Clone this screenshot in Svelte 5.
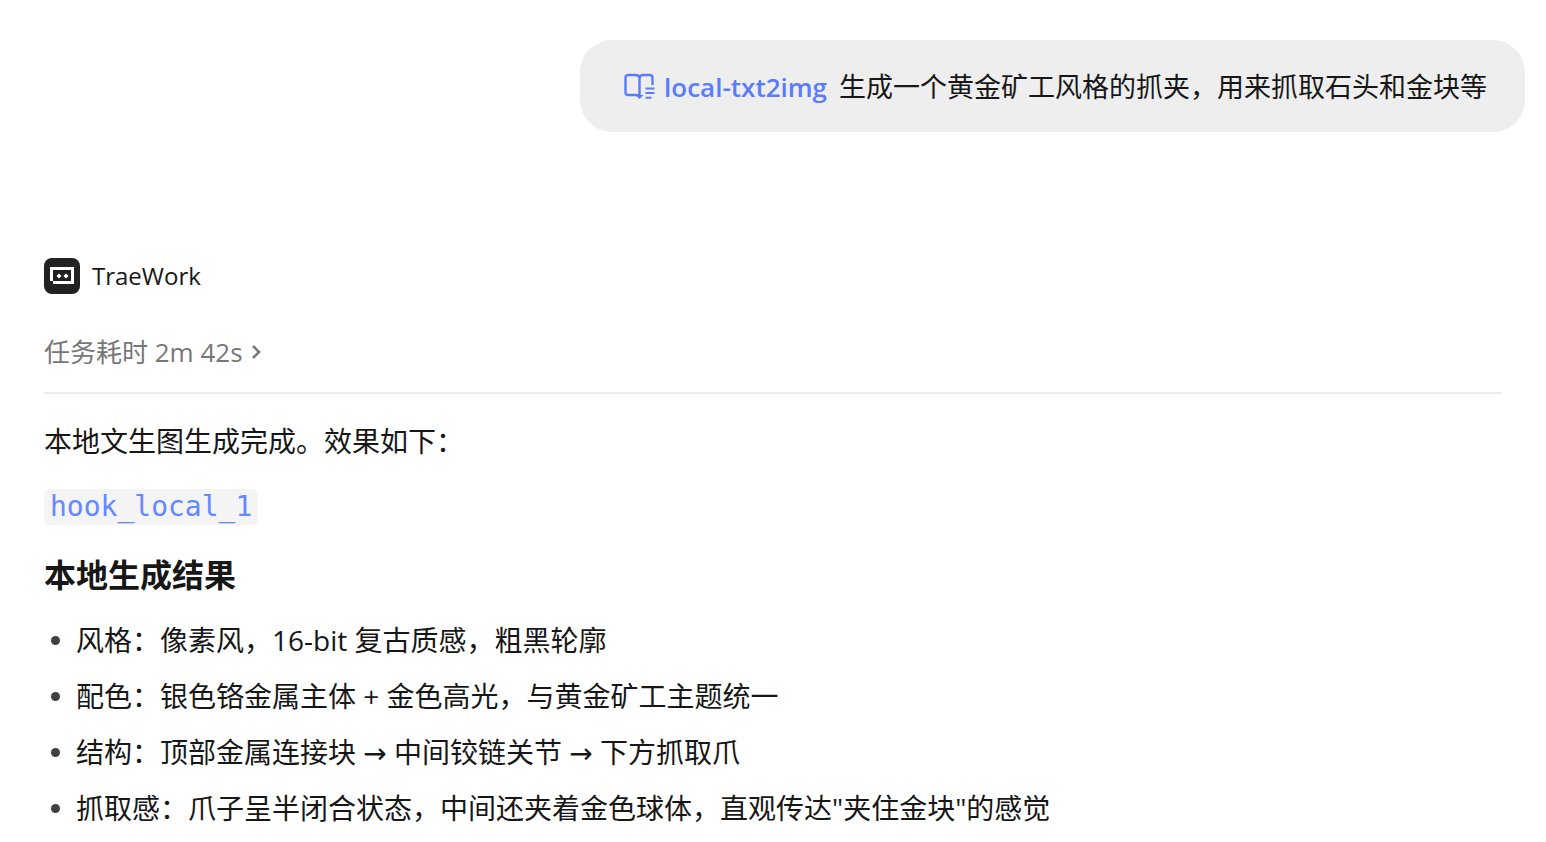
<script>
  const skill = 'local-txt2img';
  const prompt = '生成一个黄金矿工风格的抓夹，用来抓取石头和金块等';

  const details = [
    { label: '风格', text: '像素风，16-bit 复古质感，粗黑轮廓' },
    { label: '配色', text: '银色铬金属主体 + 金色高光，与黄金矿工主题统一' },
    { label: '结构', text: '顶部金属连接块 → 中间铰链关节 → 下方抓取爪' },
    { label: '抓取感', text: '爪子呈半闭合状态，中间还夹着金色球体，直观传达"夹住金块"的感觉' }
  ];
</script>

<main class="chat">
  <section class="user-row">
    <div class="bubble">
      <a class="skill" href="#skill">
        <svg width="32" height="28" viewBox="0 0 32 28" fill="none" aria-hidden="true">
          <path
            d="M15.5 23.5C15 22 13.5 22 11.5 22H4C2.3 22 1.5 21.2 1.5 19.5V5C1.5 3 2.5 2 4.5 2H11.5C14 2 15.5 3 15.5 5.5V23.5ZM15.5 5.5C15.5 3 17 2 19.5 2H25.5C27.5 2 28.5 3 28.5 5V12"
            stroke="currentColor"
            stroke-width="2.4"
            stroke-linejoin="round"
          />
          <path d="M11.5 22H19.5L15.5 26Z" fill="currentColor" />
          <path d="M21.5 15.5H30.5M21.5 20H30.5M21.5 24.8H27.5" stroke="currentColor" stroke-width="2" />
        </svg>
        <span>{skill}</span>
      </a>
      <span>{prompt}</span>
    </div>
  </section>

  <section class="reply">
    <header class="agent">
      <svg width="36" height="36" viewBox="0 0 36 36" aria-hidden="true">
        <rect width="36" height="36" rx="8" fill="#222" />
        <path d="M6 9H30V26H9V23H6ZM9 12V23H27V12Z" fill="#fff" fill-rule="evenodd" />
        <path d="M15 15.5L17.5 18L15 20.5L12.5 18ZM22 15.5L24.5 18L22 20.5L19.5 18Z" fill="#fff" />
      </svg>
      <span>TraeWork</span>
    </header>

    <button class="elapsed" type="button">
      <span>任务耗时 2m 42s</span>
      <svg width="10" height="14" viewBox="0 0 10 14" fill="none" aria-hidden="true">
        <path d="M2 1L8 7L2 13" stroke="currentColor" stroke-width="2.6" />
      </svg>
    </button>

    <p>本地文生图生成完成。效果如下：</p>

    <a class="file" href="#hook_local_1"><code>hook_local_1</code></a>

    <h3>本地生成结果</h3>

    <ul>
      {#each details as item}
        <li>{item.label}：{item.text}</li>
      {/each}
    </ul>
  </section>
</main>

<style>
  :global(body) {
    margin: 0;
    background: #fff;
  }

  .chat {
    padding: 40px 0 0;
    color: #171717;
    font-family: "Open Sans", "DejaVu Sans", "Noto Sans CJK SC", sans-serif;
    font-size: 28px;
    line-height: 44px;
  }

  .user-row {
    display: flex;
    justify-content: flex-end;
    padding: 0 21px 0 44px;
  }

  .bubble {
    display: flex;
    align-items: center;
    gap: 12px;
    padding: 25px 38px 23px 44px;
    border-radius: 32px;
    background: #eee;
    font-size: 27px;
  }

  .skill {
    display: flex;
    align-items: center;
    gap: 8px;
    color: #597bff;
    font-size: 26px;
    font-weight: 600;
    text-decoration: none;
  }

  .reply {
    padding: 126px 45px 12px 44px;
  }

  .agent {
    display: flex;
    align-items: center;
    gap: 12px;
    font-size: 24px;
    line-height: 36px;
  }

  .elapsed {
    display: flex;
    align-items: center;
    gap: 8px;
    width: 100%;
    margin: 0;
    padding: 38px 0 20px;
    border: 0;
    border-bottom: 2px solid #ececec;
    background: none;
    color: #777;
    font: inherit;
    font-size: 26px;
    line-height: 40px;
    cursor: pointer;
  }

  p {
    margin: 25px 0 26px;
  }

  .file {
    display: block;
    width: fit-content;
    padding: 0 6px;
    border-radius: 6px;
    background: #f4f4f4;
    color: #6488ff;
    line-height: 36px;
    text-decoration: none;
  }

  .file code {
    display: block;
    font-family: "DejaVu Sans Mono", monospace;
    font-size: 28px;
  }

  h3 {
    margin: 28px 0 21px;
    font-size: 32px;
    font-weight: 700;
    line-height: 44px;
  }

  ul {
    display: grid;
    gap: 12px;
    margin: 0;
    padding: 0;
    list-style: none;
  }

  li {
    display: flex;
    align-items: center;
    gap: 16px;
    padding-left: 7px;
  }

  li::before {
    content: "";
    flex: none;
    width: 9px;
    height: 9px;
    border-radius: 50%;
    background: #404040;
  }
</style>
